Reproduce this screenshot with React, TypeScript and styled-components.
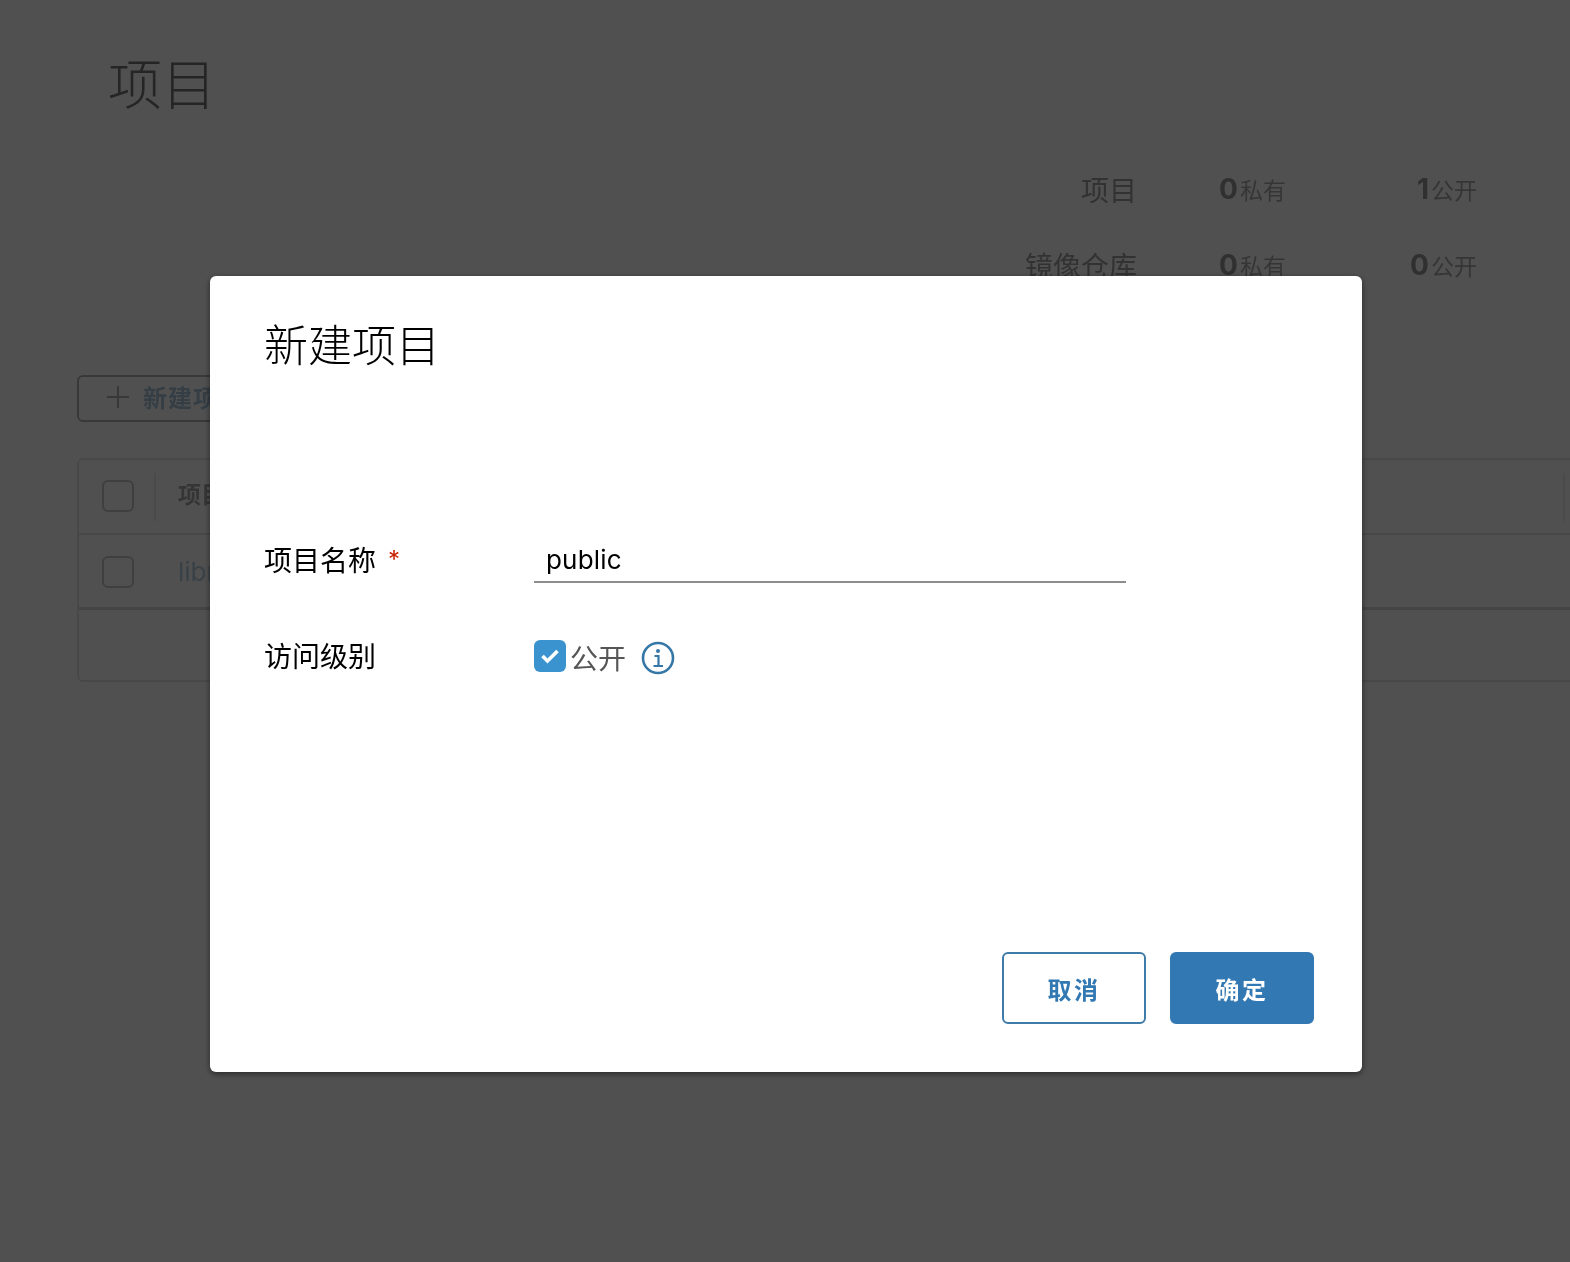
import React from 'react';
import styled, { createGlobalStyle } from 'styled-components';

const cjk = `Inter, "Noto Sans CJK SC", sans-serif`;

const GlobalStyle = createGlobalStyle`
  html, body {
    margin: 0;
    padding: 0;
    background: #fff;
    font-family: ${cjk};
  }
  * { box-sizing: border-box; }
`;

const SPage = styled.div`
  width: 1570px;
  height: 1262px;
  overflow: hidden;
  padding: 51px 0 0 77px;
  background: #fff;
  filter: blur(0.6px);
`;

const STitle = styled.h1`
  margin: 0 0 0 31px;
  font-size: 54px;
  line-height: 70px;
  font-weight: 300;
  color: #777;
`;

const SStats = styled.div`
  margin-top: 45px;
  width: 1400px;
  display: flex;
  flex-direction: column;
  gap: 30px;
`;

const SStatRow = styled.div`
  display: flex;
  align-items: center;
  justify-content: flex-end;
  height: 46px;
`;

const SStatName = styled.div`
  font-size: 28px;
  color: #a0a0a0;
  margin-right: 81px;
`;

const SStatCell = styled.div<{ $w: number }>`
  width: ${(p) => p.$w}px;
  display: flex;
  justify-content: flex-end;
  align-items: baseline;
`;

const SStatNum = styled.span`
  font-size: 28px;
  font-weight: 700;
  color: #999;
  margin-right: 2px;
`;

const SStatLabel = styled.span`
  font-size: 23px;
  color: #aaa;
`;

const SNewButton = styled.button`
  margin-top: 87px;
  width: 260px;
  height: 47px;
  display: flex;
  align-items: center;
  gap: 13px;
  padding: 0 0 4px 27px;
  background: #fff;
  border: 2px solid #b4b4b4;
  border-radius: 6px;
  font-family: ${cjk};
  font-size: 24px;
  font-weight: 700;
  letter-spacing: 1px;
  color: #a8c6dc;
`;

const STable = styled.div`
  margin-top: 36px;
  width: 1600px;
  height: 224px;
  border: 2px solid #e4e4e4;
  border-radius: 6px;
  display: flex;
  flex-direction: column;
`;

const SHeadRow = styled.div`
  height: 75px;
  flex: none;
  display: flex;
  align-items: center;
  padding-left: 23px;
  border-bottom: 2px solid #e4e4e4;
`;

const SBodyRow = styled.div`
  height: 75px;
  flex: none;
  display: flex;
  align-items: center;
  padding-left: 23px;
  border-bottom: 3px solid #d8d8d8;
`;

const SBox = styled.div`
  width: 32px;
  height: 32px;
  border: 2px solid #c8c8c8;
  border-radius: 6px;
  flex: none;
`;

const SHeadBox = styled(SBox)`
  margin-bottom: 2px;
`;

const SBodyBox = styled(SBox)`
  margin-top: 2px;
`;

const SColDivider = styled.div<{ $left: number }>`
  width: 2px;
  height: 48px;
  background: #ececec;
  margin-left: ${(p) => p.$left}px;
  flex: none;
`;

const SHeadCell = styled.div`
  margin-left: 22px;
  margin-bottom: 8px;
  width: 1385px;
  font-size: 23px;
  font-weight: 700;
  color: #aaa;
`;

const SLink = styled.a`
  margin-left: 44px;
  font-size: 26px;
  color: #b4cee0;
`;

const SOverlay = styled.div`
  position: fixed;
  inset: 0;
  background: rgba(0, 0, 0, 0.685);
  display: flex;
  justify-content: center;
  align-items: flex-start;
  padding: 276px 0 0 2px;
`;

const SModal = styled.div`
  width: 1152px;
  height: 796px;
  background: #fff;
  border-radius: 6px;
  box-shadow: 0 2px 6px rgba(0, 0, 0, 0.5);
  padding: 41px 48px 48px 54px;
  display: flex;
  flex-direction: column;
`;

const SModalTitle = styled.h2`
  margin: 0;
  font-size: 44px;
  line-height: 58px;
  font-weight: 300;
  color: #000;
`;

const SForm = styled.div`
  margin-top: 162px;
  display: flex;
  flex-direction: column;
  gap: 50px;
`;

const SFormRow = styled.div`
  display: flex;
  align-items: flex-start;
`;

const SLabel = styled.label`
  width: 270px;
  flex: none;
  font-size: 28px;
  line-height: 46px;
  color: #000;
`;

const SRequired = styled.span`
  margin-left: 12px;
  font-size: 24px;
  color: #c92100;
  vertical-align: 3px;
`;

const SInput = styled.input`
  width: 592px;
  height: 46px;
  padding: 0 12px;
  border: none;
  border-bottom: 2px solid #8c8c8c;
  outline: none;
  font-family: ${cjk};
  font-size: 26px;
  letter-spacing: 0.2px;
  color: #000;
  background: transparent;
`;

const SCheckRow = styled.div`
  display: flex;
  align-items: center;
  height: 46px;
`;

const SCheck = styled.div`
  width: 32px;
  height: 32px;
  margin-bottom: 3px;
  border-radius: 6px;
  background: #3a93cf;
  display: flex;
  align-items: center;
  justify-content: center;
`;

const SCheckLabel = styled.span`
  margin-left: 4px;
  font-size: 28px;
  color: #565656;
`;

const SInfo = styled.svg`
  margin-left: 15px;
  margin-top: 1px;
  width: 34px;
  height: 34px;
`;

const SFooter = styled.div`
  margin-top: auto;
  display: flex;
  justify-content: flex-end;
  gap: 24px;
`;

const SButton = styled.button<{ $primary?: boolean }>`
  width: 144px;
  height: 72px;
  border-radius: 6px;
  border: 2px solid ${(p) => (p.$primary ? '#3278b3' : '#3f7ba8')};
  background: ${(p) => (p.$primary ? '#3278b3' : '#fff')};
  color: ${(p) => (p.$primary ? '#fff' : '#3278b3')};
  font-family: ${cjk};
  font-size: 24px;
  font-weight: 700;
  letter-spacing: 2.5px;
`;

const App = () => {
  return (
    <>
      <GlobalStyle />
      <SPage>
        <STitle>项目</STitle>
        <SStats>
          <SStatRow>
            <SStatName>项目</SStatName>
            <SStatCell $w={68}>
              <SStatNum>0</SStatNum>
              <SStatLabel>私有</SStatLabel>
            </SStatCell>
            <SStatCell $w={191}>
              <SStatNum>1</SStatNum>
              <SStatLabel>公开</SStatLabel>
            </SStatCell>
          </SStatRow>
          <SStatRow>
            <SStatName>镜像仓库</SStatName>
            <SStatCell $w={68}>
              <SStatNum>0</SStatNum>
              <SStatLabel>私有</SStatLabel>
            </SStatCell>
            <SStatCell $w={191}>
              <SStatNum>0</SStatNum>
              <SStatLabel>公开</SStatLabel>
            </SStatCell>
          </SStatRow>
        </SStats>
        <SNewButton>
          <svg width="24" height="24" viewBox="0 0 24 24" fill="none" stroke="#b4b4b4" strokeWidth="2">
            <path d="M12 1v22M1 12h22" />
          </svg>
          新建项目
        </SNewButton>
        <STable>
          <SHeadRow>
            <SHeadBox />
            <SColDivider $left={20} />
            <SHeadCell>项目名称</SHeadCell>
            <SColDivider $left={0} />
          </SHeadRow>
          <SBodyRow>
            <SBodyBox />
            <SLink>library</SLink>
          </SBodyRow>
        </STable>
      </SPage>
      <SOverlay>
        <SModal>
          <SModalTitle>新建项目</SModalTitle>
          <SForm>
            <SFormRow>
              <SLabel>
                项目名称<SRequired>*</SRequired>
              </SLabel>
              <SInput defaultValue="public" />
            </SFormRow>
            <SFormRow>
              <SLabel>访问级别</SLabel>
              <SCheckRow>
                <SCheck>
                  <svg width="20" height="16" viewBox="0 0 20 16" fill="none" stroke="#fff" strokeWidth="3.6">
                    <path d="M2.5 8l5 5 10-10" />
                  </svg>
                </SCheck>
                <SCheckLabel>公开</SCheckLabel>
                <SInfo viewBox="0 0 34 34" fill="none" stroke="#3578a8">
                  <circle cx="17" cy="17" r="15" strokeWidth="2.6" />
                  <circle cx="17" cy="10" r="2" fill="#3578a8" stroke="none" />
                  <path d="M13.5 15H17.5V25M12.5 25H22" strokeWidth="2.2" />
                </SInfo>
              </SCheckRow>
            </SFormRow>
          </SForm>
          <SFooter>
            <SButton>取消</SButton>
            <SButton $primary>确定</SButton>
          </SFooter>
        </SModal>
      </SOverlay>
    </>
  );
};

export default App;
